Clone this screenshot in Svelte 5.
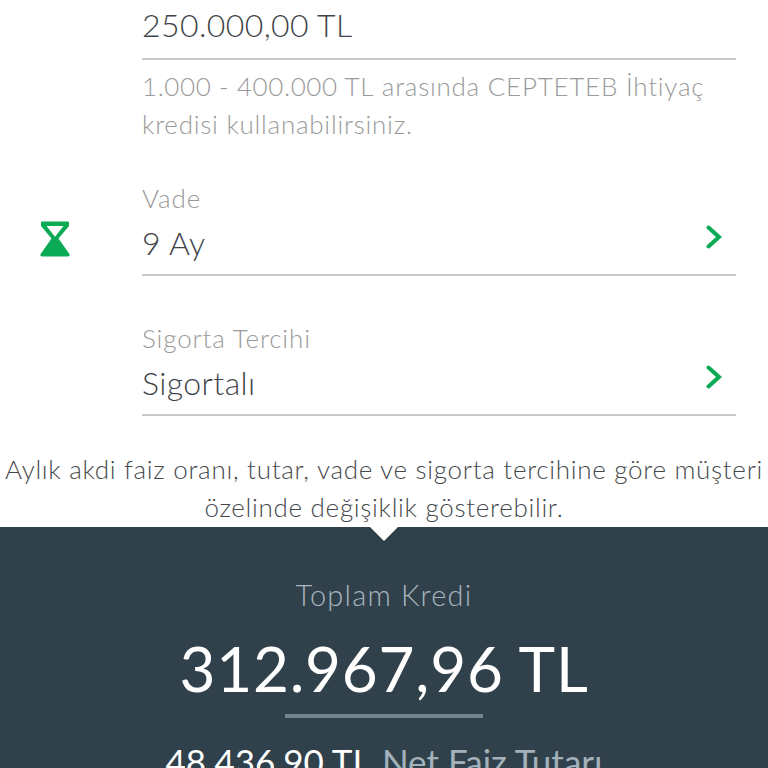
<script>
  const fields = [
    { label: 'Vade', value: '9 Ay', icon: true },
    { label: 'Sigorta Tercihi', value: 'Sigortalı', icon: false }
  ];
</script>

<div class="page">
  <section class="form">
    <div class="amount">
      <div class="value amount-value">250.000,00 TL</div>
    </div>
    <p class="hint">
      <span class="hint-num">1.000 - 400.000 TL</span> arasında CEPTETEB İhtiyaç<br />kredisi kullanabilirsiniz.
    </p>

    {#each fields as f}
      <div class="field" class:first={f.icon}>
        {#if f.icon}
          <svg class="hourglass" width="30" height="36" viewBox="0 0 30 36" aria-hidden="true">
            <path fill="#0bab55" fill-rule="evenodd" d="M2 .5H28a1 1 0 0 1 1 1V4.6a1 1 0 0 1-.2.6L18.5 17.5 29.4 33a1.5 1.5 0 0 1-1.2 2.4H1.8A1.5 1.5 0 0 1 .6 33L11.5 17.5 1.2 5.2A1 1 0 0 1 1 4.6V1.5a1 1 0 0 1 1-1ZM6.5 5 15 15.8 23.5 5Z"/>
          </svg>
        {/if}
        <div class="label">{f.label}</div>
        <div class="row">
          <div class="value">{f.value}</div>
          <svg class="chev" width="16" height="24" viewBox="0 0 16 24" aria-hidden="true">
            <path d="M2.5 2.5 13 12 2.5 21.5" fill="none" stroke="#0bab55" stroke-width="4" stroke-linecap="round" stroke-linejoin="miter"/>
          </svg>
        </div>
      </div>
    {/each}
  </section>

  <p class="note">Aylık akdi faiz oranı, tutar, vade ve sigorta tercihine göre müşteri<br />özelinde değişiklik gösterebilir.</p>

  <section class="panel">
    <span class="notch"></span>
    <div class="title">Toplam Kredi</div>
    <div class="total">312.967,96 TL</div>
    <div class="rule"></div>
    <div class="sub"><span class="sub-val">48.436,90 TL</span> <span class="sub-lab">Net Faiz Tutarı</span></div>
  </section>
</div>

<style>
  :global(body) {
    margin: 0;
    background: #fff;
  }
  .page {
    width: 768px;
    height: 768px;
    overflow: hidden;
    font-family: Lato, "Open Sans", sans-serif;
    font-weight: 300;
    background: #fff;
    display: flex;
    flex-direction: column;
  }
  .form {
    padding: 0 32px 0 142px;
  }
  .amount {
    height: 58px;
    border-bottom: 2px solid #c9c9c9;
    display: flex;
    align-items: flex-start;
  }
  .value {
    font-size: 32px;
    line-height: 38px;
    color: #3f4447;
    letter-spacing: 0.4px;
  }
  .amount-value {
    margin-top: 6px;
  }
  .hint {
    margin: 7px 0 0;
    font-size: 26px;
    line-height: 38px;
    color: #9a9a9a;
    letter-spacing: 0.75px;
    white-space: nowrap;
  }
  .hint-num {
    letter-spacing: 0.6px;
  }
  .field {
    position: relative;
    height: 140px;
    box-sizing: border-box;
    border-bottom: 2px solid #c9c9c9;
    display: flex;
    flex-direction: column;
    justify-content: flex-end;
  }
  .field.first {
    height: 133px;
  }
  .label {
    font-size: 26px;
    line-height: 32px;
    color: #9a9a9a;
    letter-spacing: 0.85px;
    margin-bottom: 4px;
  }
  .row {
    display: flex;
    justify-content: space-between;
    align-items: flex-start;
    height: 56px;
    padding-top: 6px;
    box-sizing: border-box;
  }
  .chev {
    margin-top: 1px;
    margin-right: 14px;
  }
  .hourglass {
    position: absolute;
    left: -102px;
    bottom: 17px;
  }
  .note {
    margin: 34px 0 0;
    text-align: center;
    font-size: 26px;
    line-height: 38px;
    color: #45494c;
    letter-spacing: 0.7px;
    white-space: nowrap;
  }
  .panel {
    position: relative;
    margin-top: 1px;
    flex: 1;
    background: #30414c;
    display: flex;
    flex-direction: column;
    align-items: center;
    text-align: center;
  }
  .notch {
    position: absolute;
    top: -1px;
    left: 369px;
    width: 0;
    height: 0;
    border-left: 15px solid transparent;
    border-right: 15px solid transparent;
    border-top: 15px solid #fff;
  }
  .title {
    margin-top: 49px;
    font-size: 29px;
    line-height: 38px;
    color: #a9b6bf;
    letter-spacing: 1.2px;
  }
  .total {
    margin-top: 16px;
    font-size: 62px;
    line-height: 76px;
    font-weight: 400;
    color: #fff;
    letter-spacing: 0.8px;
  }
  .rule {
    margin-top: 8px;
    width: 198px;
    height: 4px;
    background: #73848f;
  }
  .sub {
    margin-top: 22px;
    font-size: 35px;
    line-height: 42px;
    white-space: nowrap;
  }
  .sub-val {
    color: #fff;
    font-weight: 400;
  }
  .sub-lab {
    color: #a3b1bb;
    font-weight: 400;
    margin-left: 2px;
  }
</style>
